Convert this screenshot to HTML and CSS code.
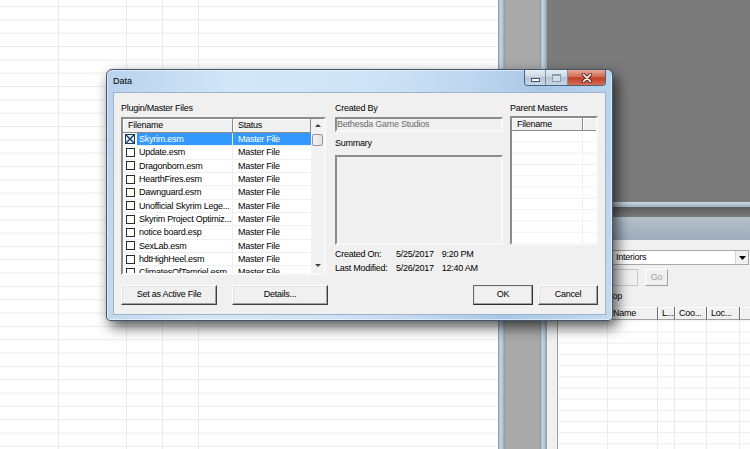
FILE: index.html
```html
<!DOCTYPE html>
<html lang="en">
<head>
  <meta charset="UTF-8">
  <title>Data</title>
  <link rel="stylesheet" href="styles.css">
</head>
<body>
  <div class="desktop">
    <div class="sheet">
      <div class="sheet-col c1"></div>
      <div class="sheet-col c2"></div>
      <div class="sheet-col c3"></div>
      <div class="sheet-col c4"></div>
      <div class="sheet-col c5"></div>
    </div>
    <div class="vbar"></div>
    <div class="mdi-gap"></div>
    <div class="vbar"></div>
    <div class="right">
      <div class="render"></div>
      <div class="hbar"></div>
      <div class="hdark"></div>
      <div class="caption-off"></div>
      <div class="cell-panel">
        <div class="combo">
          <span class="combo-text">Interiors</span>
          <span class="combo-btn"><svg width="7" height="4" viewBox="0 0 7 4"><path d="M0 0h7L3.5 4z" fill="#000"/></svg></span>
        </div>
        <div class="find-row">
          <span class="find-field"></span>
          <span class="go-btn">Go</span>
        </div>
        <div class="loop-label">Loop</div>
        <div class="ref-table">
          <div class="ref-head">
            <span class="rh w50"></span>
            <span class="rh w50 name">Name</span>
            <span class="rh w17">L...</span>
            <span class="rh w32">Coo...</span>
            <span class="rh w33">Loc...</span>
            <span class="rh rest"></span>
          </div>
          <div class="ref-body">
            <span class="rc w50"></span>
            <span class="rc w50"></span>
            <span class="rc w17"></span>
            <span class="rc w32"></span>
            <span class="rc w33"></span>
            <span class="rc rest"></span>
          </div>
        </div>
      </div>
    </div>
  </div>

  <div class="dialog">
    <div class="titlebar">
      <span class="title">Data</span>
      <div class="caption-btns">
        <span class="cbtn min"><i></i></span>
        <span class="cbtn max"><i></i></span>
        <span class="cbtn close">
          <svg width="12" height="10" viewBox="0 0 12 10">
            <path d="M2.5 1.5L9.5 8.5M9.5 1.5L2.5 8.5" stroke="#5a2418" stroke-width="3.4" stroke-linecap="round"/>
            <path d="M2.5 1.5L9.5 8.5M9.5 1.5L2.5 8.5" stroke="#fff" stroke-width="1.7" stroke-linecap="round"/>
          </svg>
        </span>
      </div>
    </div>

    <div class="client">
      <div class="top">
        <div class="col-files">
          <div class="lbl">Plugin/Master Files</div>
          <div class="sunken files">
            <div class="lv-main">
              <div class="lv-head">
                <span class="hc fn">Filename</span>
                <span class="hc st">Status</span>
              </div>
              <div class="lv-row sel">
                <span class="fn">
                  <svg class="chk" width="10" height="10" viewBox="0 0 10 10"><rect x="0.5" y="0.5" width="9" height="9" fill="#e6eef8" stroke="#1d3c63"/><path d="M1 1L9 9M9 1L1 9" stroke="#1d3c63" stroke-width="1.3"/></svg>
                  <em>Skyrim.esm</em>
                </span>
                <span class="st">Master File</span>
              </div>
              <div class="lv-row"><span class="fn"><i class="box"></i><em>Update.esm</em></span><span class="st">Master File</span></div>
              <div class="lv-row"><span class="fn"><i class="box"></i><em>Dragonborn.esm</em></span><span class="st">Master File</span></div>
              <div class="lv-row"><span class="fn"><i class="box"></i><em>HearthFires.esm</em></span><span class="st">Master File</span></div>
              <div class="lv-row"><span class="fn"><i class="box"></i><em>Dawnguard.esm</em></span><span class="st">Master File</span></div>
              <div class="lv-row"><span class="fn"><i class="box"></i><em>Unofficial Skyrim Lege...</em></span><span class="st">Master File</span></div>
              <div class="lv-row"><span class="fn"><i class="box"></i><em>Skyrim Project Optimiz...</em></span><span class="st">Master File</span></div>
              <div class="lv-row"><span class="fn"><i class="box"></i><em>notice board.esp</em></span><span class="st">Master File</span></div>
              <div class="lv-row"><span class="fn"><i class="box"></i><em>SexLab.esm</em></span><span class="st">Master File</span></div>
              <div class="lv-row"><span class="fn"><i class="box"></i><em>hdtHighHeel.esm</em></span><span class="st">Master File</span></div>
              <div class="lv-row"><span class="fn"><i class="box"></i><em>ClimatesOfTamriel.esm</em></span><span class="st">Master File</span></div>
            </div>
            <div class="vscroll">
              <span class="arr"><b class="tri-up"></b></span>
              <span class="thumb"></span>
              <span class="track"></span>
              <span class="arr"><b class="tri-down"></b></span>
            </div>
          </div>
        </div>

        <div class="col-info">
          <div class="lbl">Created By</div>
          <div class="sunken field">Bethesda Game Studios</div>
          <div class="lbl summary-lbl">Summary</div>
          <div class="sunken summary"></div>
          <div class="info">
            <span>Created On:</span><span>5/25/2017<b class="time">9:20 PM</b></span>
            <span>Last Modified:</span><span>5/26/2017<b class="time">12:40 AM</b></span>
          </div>
        </div>

        <div class="col-parent">
          <div class="lbl">Parent Masters</div>
          <div class="sunken parents">
            <div class="lv-head">
              <span class="hc pfn">Filename</span>
              <span class="hc prest"></span>
            </div>
            <div class="p-body">
              <span class="pc pfn"></span>
              <span class="pc prest"></span>
            </div>
          </div>
        </div>
      </div>

      <div class="bottom">
        <span class="btn wide">Set as Active File</span>
        <span class="btn wide details">Details...</span>
        <span class="btn ok">OK</span>
        <span class="btn cancel">Cancel</span>
      </div>
    </div>
  </div>
</body>
</html>
```

FILE: styles.css
```css
* {
  box-sizing: border-box;
}
html, body {
  margin: 0;
  padding: 0;
}
body {
  width: 750px;
  height: 449px;
  overflow: hidden;
  position: relative;
  font-family: "Liberation Sans", Arial, sans-serif;
  font-size: 9px;
  letter-spacing: -0.25px;
  color: #000;
  background: #fff;
}
em, b, i {
  font-style: normal;
  font-weight: normal;
}

/* background: spreadsheet pane, splitters, render + cell windows */
.desktop {
  display: flex;
  height: 449px;
}
.sheet {
  width: 498px;
  display: flex;
  background-color: #fff;
  background-image: linear-gradient(to bottom, transparent 12.33px, #ebebeb 12.33px);
  background-size: 100% 13.33px;
  background-position: 0 -6.33px;
}
.sheet-col {
  border-right: 1px solid #ebebeb;
}
.c1 { width: 59px; }
.c2 { width: 68px; }
.c3 { width: 36px; }
.c4 { width: 36px; }
.c5 { flex: 1; border-right: 0; }

.vbar {
  width: 7px;
  background: linear-gradient(to right, #7d8fa2, #c9d6e3 30%, #b3c3d3 65%, #8798aa);
}
.mdi-gap {
  width: 35px;
  background: #a9a9a9;
}
.right {
  flex: 1;
  display: flex;
  flex-direction: column;
}
.render {
  height: 202px;
  background: #7b7b7b;
}
.hbar {
  height: 5px;
  background: linear-gradient(#cdd8e3, #9fb0c1);
}
.hdark {
  height: 10px;
  background: linear-gradient(#5c5c5c, #7a7a7a);
}
.caption-off {
  height: 23px;
  background: linear-gradient(#b4c0cb, #9eabb8);
}
.cell-panel {
  flex: 1;
  background: #f0f0f0;
  padding-top: 10px;
  display: flex;
  flex-direction: column;
}
.combo {
  margin-left: 63px;
  margin-right: 1px;
  height: 15px;
  background: #fff;
  border: 1px solid #a5a7ad;
  display: flex;
  justify-content: space-between;
  align-items: stretch;
}
.combo-text {
  padding-left: 5px;
  line-height: 13px;
}
.combo-btn {
  width: 13px;
  display: flex;
  align-items: center;
  justify-content: center;
  background: #f0f0f0;
  border-left: 1px solid #d5d5d5;
}
.find-row {
  margin-top: 4px;
  display: flex;
  height: 17px;
}
.find-field {
  margin-left: 43px;
  width: 48px;
  border: 1px solid #c8c8c8;
  background: #f0f0f0;
}
.go-btn {
  margin-left: 7px;
  width: 23px;
  border: 1px solid;
  border-color: #fff #a0a0a0 #a0a0a0 #fff;
  color: #a0a0a0;
  text-align: center;
  line-height: 15px;
}
.loop-label {
  margin-top: 4px;
  padding-left: 56px;
  line-height: 13px;
}
.ref-table {
  margin-top: 4px;
  margin-left: 10px;
  flex: 1;
  display: flex;
  flex-direction: column;
  border-left: 1px solid #a0a0a0;
}
.ref-head {
  display: flex;
  height: 13px;
  background: #f0f0f0;
}
.rh {
  border-right: 1px solid #6d6d6d;
  border-bottom: 1px solid #a0a0a0;
  box-shadow: inset 1px 1px 0 #fff;
  padding-left: 4px;
  line-height: 12px;
  white-space: nowrap;
  overflow: hidden;
}
.rh.name { padding-left: 5px; }
.ref-body {
  flex: 1;
  display: flex;
  background-color: #fff;
  background-image: linear-gradient(to bottom, transparent 10.2px, #ececec 10.2px);
  background-size: 100% 11.2px;
  background-position: 0 1.3px;
}
.rc {
  border-right: 1px solid #ececec;
}
.w50 { width: 50px; }
.w17 { width: 17px; }
.w32 { width: 32px; }
.w33 { width: 33px; }
.rest { flex: 1; border-right: 0; }

/* the Data dialog */
.dialog {
  position: absolute;
  left: 106px;
  top: 69px;
  width: 507px;
  height: 252px;
  border: 1px solid #43566b;
  border-radius: 6px 6px 4px 4px;
  background: linear-gradient(100deg, #b9d2ec 0%, #d4e7f8 25%, #cfe3f6 48%, #bfd7ef 66%, #a8c7e7 80%, #c3daf0 100%);
  box-shadow: 4px 6px 14px rgba(0, 0, 0, 0.68), inset 0 0 0 1px rgba(255, 255, 255, 0.5);
  padding: 0 6px 5px 6px;
  display: flex;
  flex-direction: column;
}
.titlebar {
  height: 22px;
  display: flex;
  justify-content: space-between;
  align-items: flex-start;
}
.title {
  line-height: 22px;
  letter-spacing: 0;
}
.caption-btns {
  display: flex;
  height: 16px;
  border: 1px solid #4e6277;
  border-top: 0;
  border-radius: 0 0 4px 4px;
  overflow: hidden;
}
.cbtn {
  display: flex;
  align-items: center;
  justify-content: center;
}
.min, .max {
  width: 21px;
  background: linear-gradient(#e6eef6, #cbd8e5 45%, #b3c4d6 50%, #c8d7e6);
  border-right: 1px solid #7d8fa3;
}
.min i {
  width: 9px;
  height: 4px;
  margin-top: 5px;
  background: #fff;
  border: 1px solid #44546a;
}
.max {
  width: 22px;
}
.max i {
  width: 9px;
  height: 8px;
  border: 1px solid #8c9db0;
  border-top-width: 2px;
  background: rgba(255, 255, 255, 0.4);
}
.close {
  width: 37px;
  background: linear-gradient(#e9a999, #d46a55 45%, #c23d24 52%, #d56e58);
}

.client {
  flex: 1;
  border: 1px solid #9db3c9;
  background: #f0f0f0;
  padding: 9px 7px 0 7px;
}
.top {
  display: flex;
  height: 175px;
}
.lbl {
  line-height: 13px;
  white-space: nowrap;
}
.sunken {
  border: 2px solid;
  border-color: #8c8c8c #f8f8f8 #f8f8f8 #8c8c8c;
}
.col-files {
  width: 205px;
}
.col-info {
  width: 168px;
  margin-left: 9px;
}
.col-parent {
  width: 88px;
  margin-left: 7px;
}

/* plugin list */
.files {
  margin-top: 2px;
  height: 158px;
  display: flex;
  background: #fff;
  overflow: hidden;
}
.lv-main {
  width: 188px;
  overflow: hidden;
}
.lv-head {
  display: flex;
  height: 13px;
  background: #f0f0f0;
}
.files .lv-head {
  height: 14px;
}
.hc {
  border-right: 1px solid #8a8a8a;
  border-bottom: 1px solid #8a8a8a;
  box-shadow: inset 1px 1px 0 #fff;
  padding-left: 5px;
  line-height: 12px;
}
.files .hc {
  line-height: 13px;
}
.fn { width: 110px; }
.st { width: 78px; }
.lv-row {
  display: flex;
  height: 13.33px;
  line-height: 12.33px;
  border-bottom: 1px solid #f0f0f0;
  white-space: nowrap;
}
.lv-row .fn {
  display: flex;
  padding-left: 3px;
  border-right: 1px solid #f0f0f0;
  overflow: hidden;
}
.lv-row .st {
  padding-left: 5px;
}
.lv-row em {
  flex: 1;
  margin-left: 2px;
  padding-left: 2px;
  overflow: hidden;
}
.box {
  flex: none;
  align-self: center;
  width: 9px;
  height: 9px;
  border: 1px solid #2a2a2a;
  background: #fff;
}
.chk {
  flex: none;
  align-self: center;
  margin-left: -1px;
}
.sel em, .sel .st {
  background: #3399ff;
  color: #fff;
}
.vscroll {
  width: 13px;
  display: flex;
  flex-direction: column;
  align-items: center;
  background: #f2f2f2;
}
.arr {
  width: 13px;
  height: 13px;
  display: flex;
  align-items: center;
  justify-content: center;
}
.tri-up {
  border-left: 3px solid transparent;
  border-right: 3px solid transparent;
  border-bottom: 3px solid #404040;
  margin-top: -1px;
}
.tri-down {
  border-left: 3px solid transparent;
  border-right: 3px solid transparent;
  border-top: 3px solid #404040;
  margin-top: -2px;
}
.thumb {
  width: 11px;
  height: 12px;
  margin-top: 2px;
  border: 1px solid #979797;
  border-radius: 2px;
  background: linear-gradient(to right, #f4f4f4, #e2e2e2);
}
.track {
  flex: 1;
}

/* created by / summary */
.field {
  margin-top: 2px;
  height: 15px;
  background: #f0f0f0;
  color: #6d6d6d;
  line-height: 11px;
  white-space: nowrap;
}
.summary-lbl {
  margin-top: 5px;
}
.summary {
  margin-top: 5px;
  height: 90px;
  background: #f0f0f0;
}
.info {
  margin-top: 2px;
  display: grid;
  grid-template-columns: 61px auto;
  line-height: 14px;
  white-space: nowrap;
}
.time {
  margin-left: 8px;
}

/* parent masters */
.parents {
  margin-top: 1px;
  height: 129px;
  display: flex;
  flex-direction: column;
  background: #fff;
}
.pfn { width: 71px; }
.prest { flex: 1; }
.lv-head .prest { border-right: 0; }
.p-body {
  flex: 1;
  display: flex;
  background-image: linear-gradient(to bottom, transparent 10.3px, #efefef 10.3px);
  background-size: 100% 11.3px;
  background-position: 0 0;
}
.pc.pfn {
  border-right: 1px solid #efefef;
}

/* buttons */
.bottom {
  margin-top: 8px;
  display: flex;
}
.btn {
  height: 20px;
  line-height: 17px;
  text-align: center;
  background: #f0f0f0;
  border: 1px solid;
  border-color: #fff #3f3f3f #3f3f3f #fff;
  box-shadow: inset -1px -1px 0 #a0a0a0, inset 1px 1px 0 #e3e3e3;
}
.wide { width: 96px; }
.details { margin-left: 15px; }
.ok {
  width: 60px;
  margin-left: auto;
  border-color: #6a6a6a #2f2f2f #2f2f2f #6a6a6a;
}
.cancel {
  width: 60px;
  margin-left: 5px;
}
```
